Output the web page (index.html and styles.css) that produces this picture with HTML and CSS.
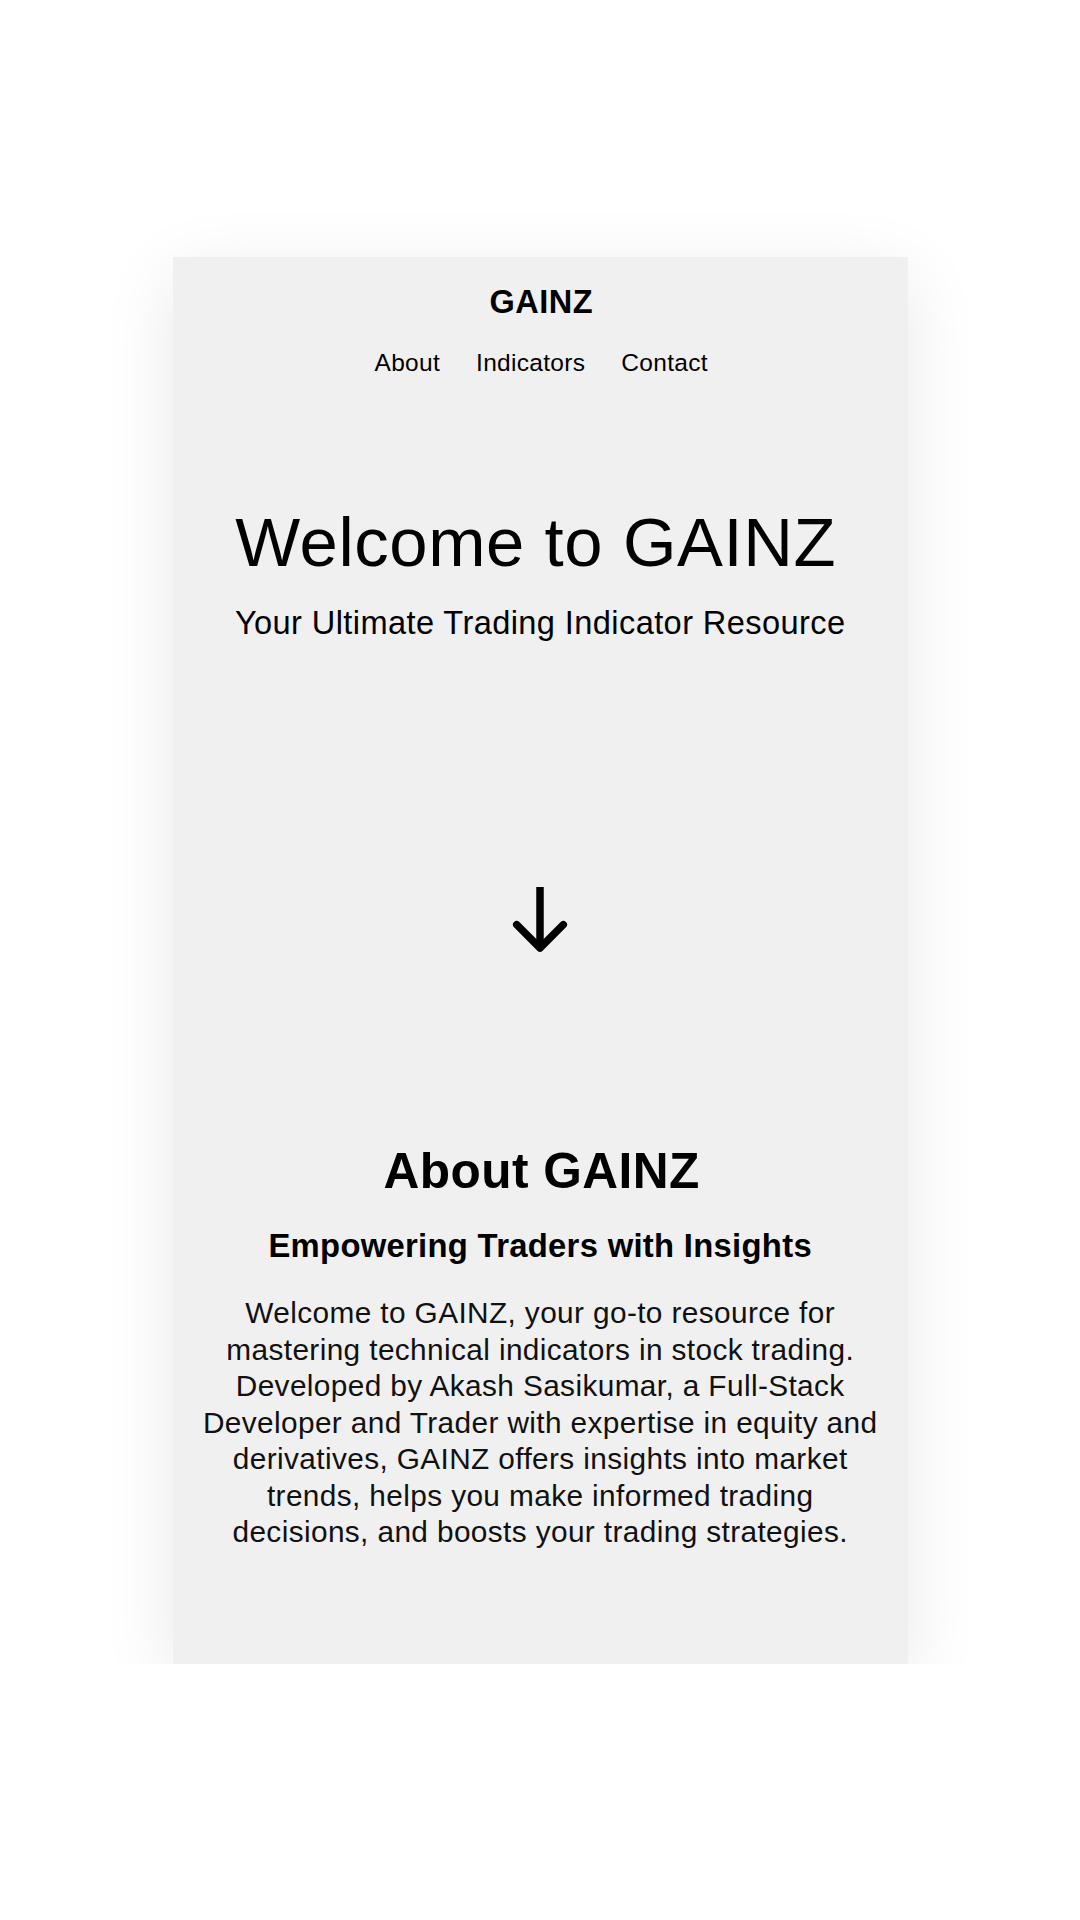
FILE: index.html
```html
<!DOCTYPE html>
<html lang="en">
<head>
<meta charset="utf-8">
<title>GAINZ</title>
<link rel="stylesheet" href="styles.css">
</head>
<body>
<main class="card">
  <header class="site-header">
    <div class="logo">GAINZ</div>
    <nav class="nav">
      <a href="#about">About</a>
      <a href="#indicators">Indicators</a>
      <a href="#contact">Contact</a>
    </nav>
  </header>
  <section class="hero">
    <h1 class="hero-title">Welcome to GAINZ</h1>
    <p class="hero-sub">Your Ultimate Trading Indicator Resource</p>
    <svg class="scroll-arrow" viewBox="0 0 80 80" width="80" height="80" aria-hidden="true">
      <path d="M40 7 V66" fill="none" stroke="#000" stroke-width="7.5" stroke-linecap="butt"/>
      <path d="M16.7 44.7 L40 68 L63.3 44.7" fill="none" stroke="#000" stroke-width="7.5" stroke-linecap="round" stroke-linejoin="round"/>
    </svg>
  </section>
  <section class="about" id="about">
    <h2 class="about-title">About GAINZ</h2>
    <h3 class="about-sub">Empowering Traders with Insights</h3>
    <p class="about-text">Welcome to GAINZ, your go-to resource for<br>mastering technical indicators in stock trading.<br>Developed by Akash Sasikumar, a Full-Stack<br>Developer and Trader with expertise in equity and<br>derivatives, GAINZ offers insights into market<br>trends, helps you make informed trading<br>decisions, and boosts your trading strategies.</p>
  </section>
</main>
</body>
</html>
```
FILE: styles.css
```css
html, body {
  margin: 0;
  padding: 0;
  background: #ffffff;
}

body {
  font-family: "Liberation Sans", Arial, Helvetica, sans-serif;
  color: #000;
  padding-top: 256.7px;
}

.card {
  display: block;
  box-sizing: border-box;
  width: 735px;
  margin: 0 auto;
  margin-left: 172.7px;
  background: #f0f0f0;
  padding: 25px 32.6px 113.3px;
  text-align: center;
  box-shadow: 0 18px 70px rgba(0, 0, 0, 0.09);
}

.site-header {
  display: flex;
  flex-direction: column;
  align-items: center;
}

.logo {
  font-size: 32.5px;
  line-height: 40px;
  font-weight: 700;
  letter-spacing: 0.5px;
  padding-left: 2px;
}

.nav {
  display: flex;
  justify-content: center;
  gap: 36px;
  margin-top: 26.5px;
  padding-left: 2px;
}

.nav a {
  font-size: 24.5px;
  line-height: 30px;
  color: #000;
  text-decoration: none;
  letter-spacing: 0.3px;
}

.hero {
  display: flex;
  flex-direction: column;
  align-items: center;
}

.hero-title {
  margin: 125px 0 0;
  padding-right: 9px;
  font-size: 68.8px;
  line-height: 80px;
  font-weight: 400;
  letter-spacing: 0.6px;
}

.hero-sub {
  margin: 19.5px 0 0;
  font-size: 32.6px;
  line-height: 40px;
  letter-spacing: 0.4px;
}

.scroll-arrow {
  display: block;
  margin-top: 237.3px;
}

.about {
  display: flex;
  flex-direction: column;
  align-items: center;
}

.about-title {
  margin: 181px 0 0;
  padding-left: 3px;
  font-size: 49.6px;
  line-height: 60px;
  font-weight: 700;
  letter-spacing: 0.45px;
}

.about-sub {
  margin: 25.3px 0 0;
  font-size: 32.8px;
  line-height: 40px;
  font-weight: 700;
  letter-spacing: 0.3px;
}

.about-text {
  margin: 28.8px -20px 0;
  font-size: 29.8px;
  line-height: 36.5px;
  color: #111;
  letter-spacing: 0.38px;
}
```
